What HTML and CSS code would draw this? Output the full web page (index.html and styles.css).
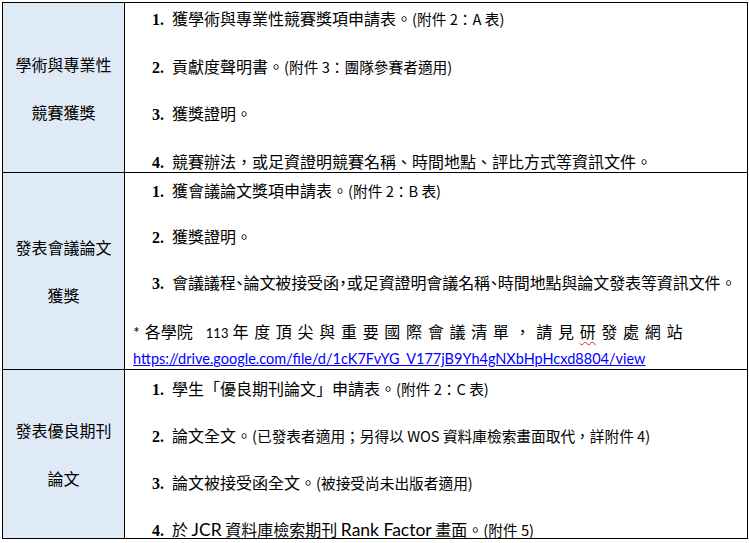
FILE: index.html
```html
<!DOCTYPE html>
<html lang="zh-Hant">
<head>
<meta charset="utf-8">
<title>獎項申請文件</title>
<link rel="stylesheet" href="styles.css">
</head>
<body>
<div class="sheet">
  <div class="label"><span>學術與專業性</span><span>競賽獲獎</span></div>
  <div class="content c1">
    <p class="item"><span class="num">1.</span>獲學術與專業性競賽獎項申請表。<span class="sm">(附件 2：A 表)</span></p>
    <p class="item"><span class="num">2.</span>貢獻度聲明書。<span class="sm">(附件 3：團隊參賽者適用)</span></p>
    <p class="item"><span class="num">3.</span>獲獎證明。</p>
    <p class="item"><span class="num">4.</span>競賽辦法，或足資證明競賽名稱、時間地點、評比方式等資訊文件。</p>
  </div>

  <div class="label"><span>發表會議論文</span><span>獲獎</span></div>
  <div class="content c2">
    <p class="item"><span class="num">1.</span>獲會議論文獎項申請表。<span class="sm">(附件 2：B 表)</span></p>
    <p class="item"><span class="num">2.</span>獲獎證明。</p>
    <p class="item tight"><span class="num">3.</span>會議議程<span class="halt">、</span>論文被接受函<span class="halt">，</span>或足資證明會議名稱<span class="halt">、</span>時間地點與論文發表等資訊文件。</p>
    <div class="note">
      <p class="note-line"><span class="star">*</span><span class="n-a">各學院</span><span class="lt n-num">113</span><span class="spread">年度頂尖與重要國際會議清單，請見<span class="typo">研</span>發處網站</span></p>
      <p class="note-line"><a class="link" href="#">https://drive.google.com/file/d/1cK7FvYG_V177jB9Yh4gNXbHpHcxd8804/view</a></p>
    </div>
  </div>

  <div class="label"><span>發表優良期刊</span><span>論文</span></div>
  <div class="content c3">
    <p class="item"><span class="num">1.</span>學生「優良期刊論文」申請表。<span class="sm">(附件 2：C 表)</span></p>
    <p class="item"><span class="num">2.</span>論文全文。<span class="sm">(已發表者適用；另得以 WOS 資料庫檢索畫面取代，詳附件 4)</span></p>
    <p class="item"><span class="num">3.</span>論文被接受函全文。<span class="sm">(被接受尚未出版者適用)</span></p>
    <p class="item"><span class="num">4.</span>於 <span class="lt">JCR</span> 資料庫檢索期刊 <span class="lt">Rank Factor</span> 畫面。<span class="sm">(附件 5)</span></p>
  </div>
</div>
</body>
</html>
```

FILE: styles.css
```css
html, body {
  margin: 0;
  padding: 0;
  background: #ffffff;
}

body {
  font-family: "Noto Sans CJK TC", "Noto Sans", sans-serif;
  color: #000000;
}

.sheet {
  margin: 2px 0 0 2px;
  width: 746px;
  height: 537px;
  box-sizing: border-box;
  padding: 1px;
  background: #000000;
  display: grid;
  grid-template-columns: 121px 622px;
  grid-template-rows: 169px 196px 168px;
  gap: 1px;
}

.label {
  background: #deeaf6;
  display: flex;
  flex-direction: column;
  justify-content: center;
  align-items: center;
  font-size: 16px;
  line-height: 48px;
}

.content {
  background: #ffffff;
  padding-left: 8px;
  display: flex;
  flex-direction: column;
  box-sizing: border-box;
  overflow: visible;
}

.c1 {
  padding-top: 5px;
  padding-bottom: 1px;
  justify-content: space-between;
}

.c2 {
  padding-top: 7px;
  gap: 26px;
}

.c3 {
  padding-top: 8px;
  gap: 27px;
}

.item {
  margin: 0;
  padding-left: 19px;
  height: 20px;
  font-size: 16px;
  line-height: 20px;
  white-space: nowrap;
}

.item span {
  line-height: 20px;
  vertical-align: baseline;
}

.item.tight {
  letter-spacing: -0.1px;
}

.num {
  display: inline-block;
  width: 20px;
  height: 20px;
  font-family: "Liberation Serif", serif;
  font-weight: bold;
  letter-spacing: 0;
}

.sm {
  font-size: 14.7px;
}

.lt {
  font-family: Lato, "Liberation Sans", sans-serif;
  font-size: 17.5px;
}

.halt {
  font-feature-settings: "halt" 1;
}

.note {
  display: flex;
  flex-direction: column;
}

.note-line {
  margin: 0;
  height: 26px;
  font-size: 16px;
  line-height: 26px;
  white-space: nowrap;
}

.note-line span,
.note-line a {
  line-height: 26px;
}

.star {
  font-family: Lato, "Liberation Sans", sans-serif;
}

.n-a {
  margin-left: 5px;
}

.lt.n-num {
  font-size: 13px;
  margin-left: 13px;
  margin-right: 4px;
}

.spread {
  letter-spacing: 5.7px;
}

.typo {
  letter-spacing: 0;
  margin-right: 5.7px;
  text-decoration: underline wavy #d81e1e;
  text-decoration-thickness: 1px;
  text-underline-offset: 3px;
}

.link {
  font-family: Lato, "Liberation Sans", sans-serif;
  font-size: 14.5px;
  color: #0000ff;
  text-decoration: underline;
}
```
